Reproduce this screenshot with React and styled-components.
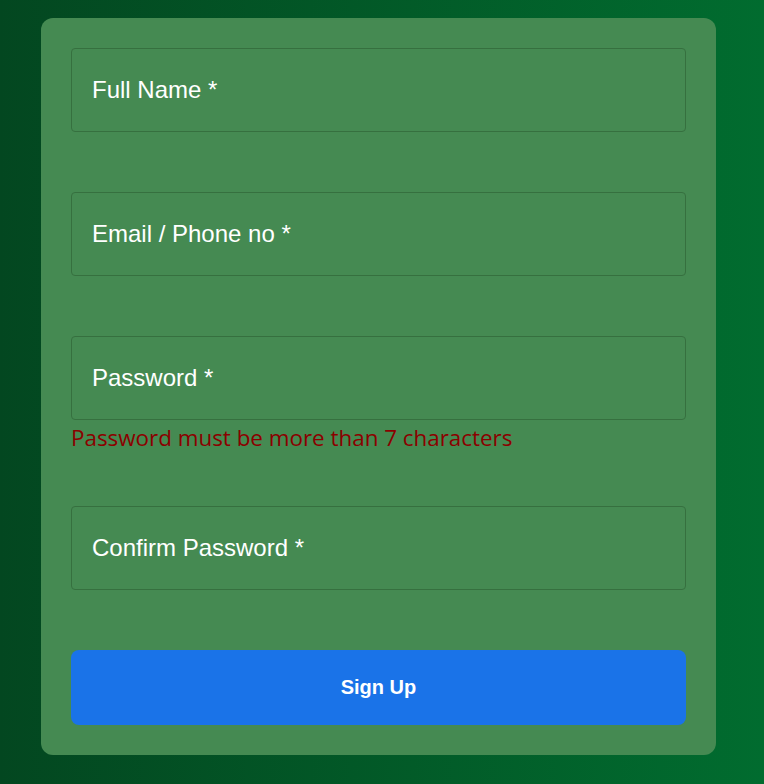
import React from "react";
import styled, { createGlobalStyle } from "styled-components";

const Global = createGlobalStyle`
  html, body { margin: 0; padding: 0; height: 100%; }
  body { font-family: "Liberation Sans", Arial, sans-serif; }
  #root { min-height: 100%; }
  * { box-sizing: border-box; }
`;

const Page = styled.div`
  min-height: 784px;
  background: linear-gradient(to right, #034720, #016c2f);
  padding: 18px 48px 29px 41px;
`;

const Card = styled.form`
  background: #458a52;
  border-radius: 12px;
  padding: 30px;
  display: flex;
  flex-direction: column;
`;

const Field = styled.div`
  display: flex;
  flex-direction: column;
  margin-bottom: 60px;
`;

const Input = styled.input`
  height: 84px;
  width: 100%;
  background: transparent;
  border: 1px solid #36703f;
  border-radius: 4px;
  padding: 0 20px;
  font-family: "Liberation Sans", Arial, sans-serif;
  font-size: 24px;
  color: #fff;
  outline: none;
  &::placeholder { color: #fff; opacity: 1; }
`;

const Error = styled.div`
  height: 26px;
  font-family: "Open Sans", sans-serif;
  font-size: 22.4px;
  line-height: 35px;
  color: #8b0000;
  white-space: nowrap;
`;

const Button = styled.button`
  height: 75px;
  border: none;
  border-radius: 8px;
  background: #1a73e8;
  color: #fff;
  font-family: "Liberation Sans", Arial, sans-serif;
  font-weight: bold;
  font-size: 20px;
  cursor: pointer;
`;

export default function App() {
  return (
    <>
      <Global />
      <Page>
        <Card onSubmit={(e) => e.preventDefault()}>
          <Field>
            <Input placeholder="Full Name *" />
          </Field>
          <Field>
            <Input placeholder="Email / Phone no *" />
          </Field>
          <Field>
            <Input type="password" placeholder="Password *" />
            <Error>Password must be more than 7 characters</Error>
          </Field>
          <Field>
            <Input type="password" placeholder="Confirm Password *" />
          </Field>
          <Button type="submit">Sign Up</Button>
        </Card>
      </Page>
    </>
  );
}
